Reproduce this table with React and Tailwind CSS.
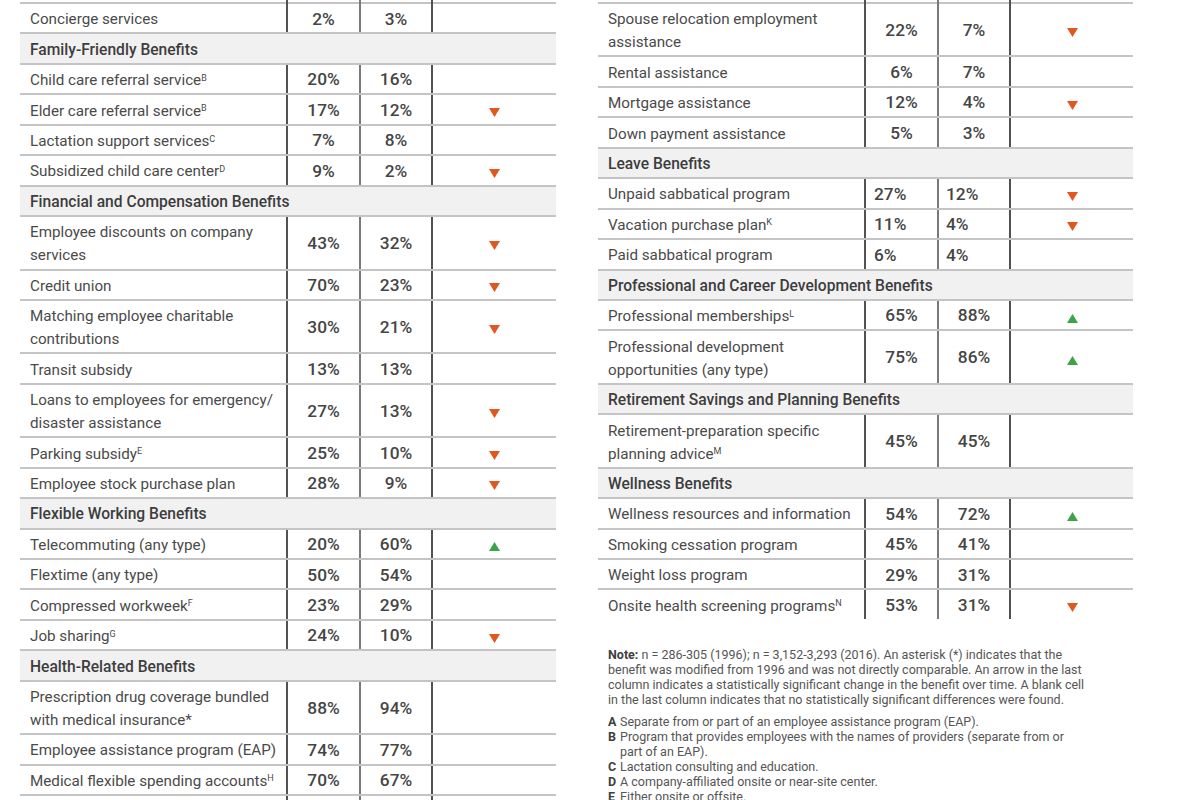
import React from "react";

const Down = () => (
  <svg width="11" height="9" viewBox="0 0 11 9"><polygon points="0,0 11,0 5.5,9" fill="#e2571e" /></svg>
);
const Up = () => (
  <svg width="11" height="9" viewBox="0 0 11 9"><polygon points="0,9 11,9 5.5,0" fill="#3ca448" /></svg>
);

const S = ({ children }) => (
  <sup className="text-[9px] font-normal">{children}</sup>
);

function Row({ label, a, b, arrow, leftNum, last, stub, right }) {
  const border = last ? "" : "border-b-2 border-[#c4c4c4]";
  const cols = right
    ? "grid-cols-[266px_73px_72px_124px]"
    : "grid-cols-[266px_73px_72px_125px]";
  return (
    <div className={`grid ${cols} ${border} ${stub ? "h-[4px]" : ""}`}>
      <div className={stub ? "" : "pl-[10px] pt-[4.3px] pb-[1.15px] leading-[23px] text-[15.2px] text-[#4a4a4a]"}>{label}</div>
      <div className={`border-l-2 border-[#525252] flex items-center pt-[2.5px] ${leftNum ? "justify-start pl-[8px]" : "justify-center"} text-[17.3px] font-medium text-[#454545]`}>{a}</div>
      <div className={`border-l-2 border-[#7a7a7a] flex items-center pt-[2.5px] ${leftNum ? "justify-start pl-[7px]" : "justify-center"} text-[17.3px] font-medium text-[#454545]`}>{b}</div>
      <div className="border-l-2 border-[#525252] flex items-center justify-center pt-[6px]">
        {arrow === "down" ? <Down /> : arrow === "up" ? <Up /> : null}
      </div>
    </div>
  );
}

function Head({ children }) {
  return (
    <div className="bg-[#f1f1f2] border-b-2 border-[#c4c4c4] pl-[10px] pt-[4.3px] pb-[1.15px] leading-[23px] text-[15.6px] font-medium text-[#3d3d3d]">
      {children}
    </div>
  );
}

export default function App() {
  return (
    <div className="w-[1200px] h-[800px] overflow-hidden bg-white font-['Roboto','Noto_Sans',sans-serif]">
      <div className="flex pl-[20px] gap-[42px]">
        {/* Left table */}
        <div className="w-[536px] shrink-0">
          <Row stub />
          <Row label="Concierge services" a="2%" b="3%" />
          <Head>Family-Friendly Benefits</Head>
          <Row label={<>Child care referral service<S>B</S></>} a="20%" b="16%" />
          <Row label={<>Elder care referral service<S>B</S></>} a="17%" b="12%" arrow="down" />
          <Row label={<>Lactation support services<S>C</S></>} a="7%" b="8%" />
          <Row label={<>Subsidized child care center<S>D</S></>} a="9%" b="2%" arrow="down" />
          <Head>Financial and Compensation Benefits</Head>
          <Row label={<>Employee discounts on company<br />services</>} a="43%" b="32%" arrow="down" />
          <Row label="Credit union" a="70%" b="23%" arrow="down" />
          <Row label={<>Matching employee charitable<br />contributions</>} a="30%" b="21%" arrow="down" />
          <Row label="Transit subsidy" a="13%" b="13%" />
          <Row label={<>Loans to employees for emergency/<br />disaster assistance</>} a="27%" b="13%" arrow="down" />
          <Row label={<>Parking subsidy<S>E</S></>} a="25%" b="10%" arrow="down" />
          <Row label="Employee stock purchase plan" a="28%" b="9%" arrow="down" />
          <Head>Flexible Working Benefits</Head>
          <Row label="Telecommuting (any type)" a="20%" b="60%" arrow="up" />
          <Row label="Flextime (any type)" a="50%" b="54%" />
          <Row label={<>Compressed workweek<S>F</S></>} a="23%" b="29%" />
          <Row label={<>Job sharing<S>G</S></>} a="24%" b="10%" arrow="down" />
          <Head>Health-Related Benefits</Head>
          <Row label={<>Prescription drug coverage bundled<br />with medical insurance*</>} a="88%" b="94%" />
          <Row label="Employee assistance program (EAP)" a="74%" b="77%" />
          <Row label={<>Medical flexible spending accounts<S>H</S></>} a="70%" b="67%" />
          <Row label="" a="" b="" />
        </div>

        {/* Right column */}
        <div className="w-[535px] shrink-0">
          <Row right stub />
          <Row right label={<>Spouse relocation employment<br />assistance</>} a="22%" b="7%" arrow="down" />
          <Row right label="Rental assistance" a="6%" b="7%" />
          <Row right label="Mortgage assistance" a="12%" b="4%" arrow="down" />
          <Row right label="Down payment assistance" a="5%" b="3%" />
          <Head>Leave Benefits</Head>
          <Row right leftNum label="Unpaid sabbatical program" a="27%" b="12%" arrow="down" />
          <Row right leftNum label={<>Vacation purchase plan<S>K</S></>} a="11%" b="4%" arrow="down" />
          <Row right leftNum label="Paid sabbatical program" a="6%" b="4%" />
          <Head>Professional and Career Development Benefits</Head>
          <Row right label={<>Professional memberships<S>L</S></>} a="65%" b="88%" arrow="up" />
          <Row right label={<>Professional development<br />opportunities (any type)</>} a="75%" b="86%" arrow="up" />
          <Head>Retirement Savings and Planning Benefits</Head>
          <Row right label={<>Retirement-preparation specific<br />planning advice<S>M</S></>} a="45%" b="45%" />
          <Head>Wellness Benefits</Head>
          <Row right label="Wellness resources and information" a="54%" b="72%" arrow="up" />
          <Row right label="Smoking cessation program" a="45%" b="41%" />
          <Row right label="Weight loss program" a="29%" b="31%" />
          <Row right last label={<>Onsite health screening programs<S>N</S></>} a="53%" b="31%" arrow="down" />

          <div className="mt-[28px] pl-[10px] text-[12.5px] leading-[15px] text-[#555555] whitespace-nowrap">
            <p>
              <span className="font-bold text-[#404040]">Note:</span> n = 286-305 (1996); n = 3,152-3,293 (2016). An asterisk (*) indicates that the
              <br />benefit was modified from 1996 and was not directly comparable. An arrow in the last
              <br />column indicates a statistically significant change in the benefit over time. A blank cell
              <br />in the last column indicates that no statistically significant differences were found.
            </p>
            <div className="mt-[7px] flex flex-col">
              {[
                ["A", <>Separate from or part of an employee assistance program (EAP).</>],
                ["B", <>Program that provides employees with the names of providers (separate from or<br />part of an EAP).</>],
                ["C", <>Lactation consulting and education.</>],
                ["D", <>A company-affiliated onsite or near-site center.</>],
                ["E", <>Either onsite or offsite.</>],
              ].map(([k, t]) => (
                <div key={k} className="flex">
                  <span className="w-[12px] shrink-0 font-bold text-[#404040]">{k}</span>
                  <span>{t}</span>
                </div>
              ))}
            </div>
          </div>
        </div>
      </div>
    </div>
  );
}
